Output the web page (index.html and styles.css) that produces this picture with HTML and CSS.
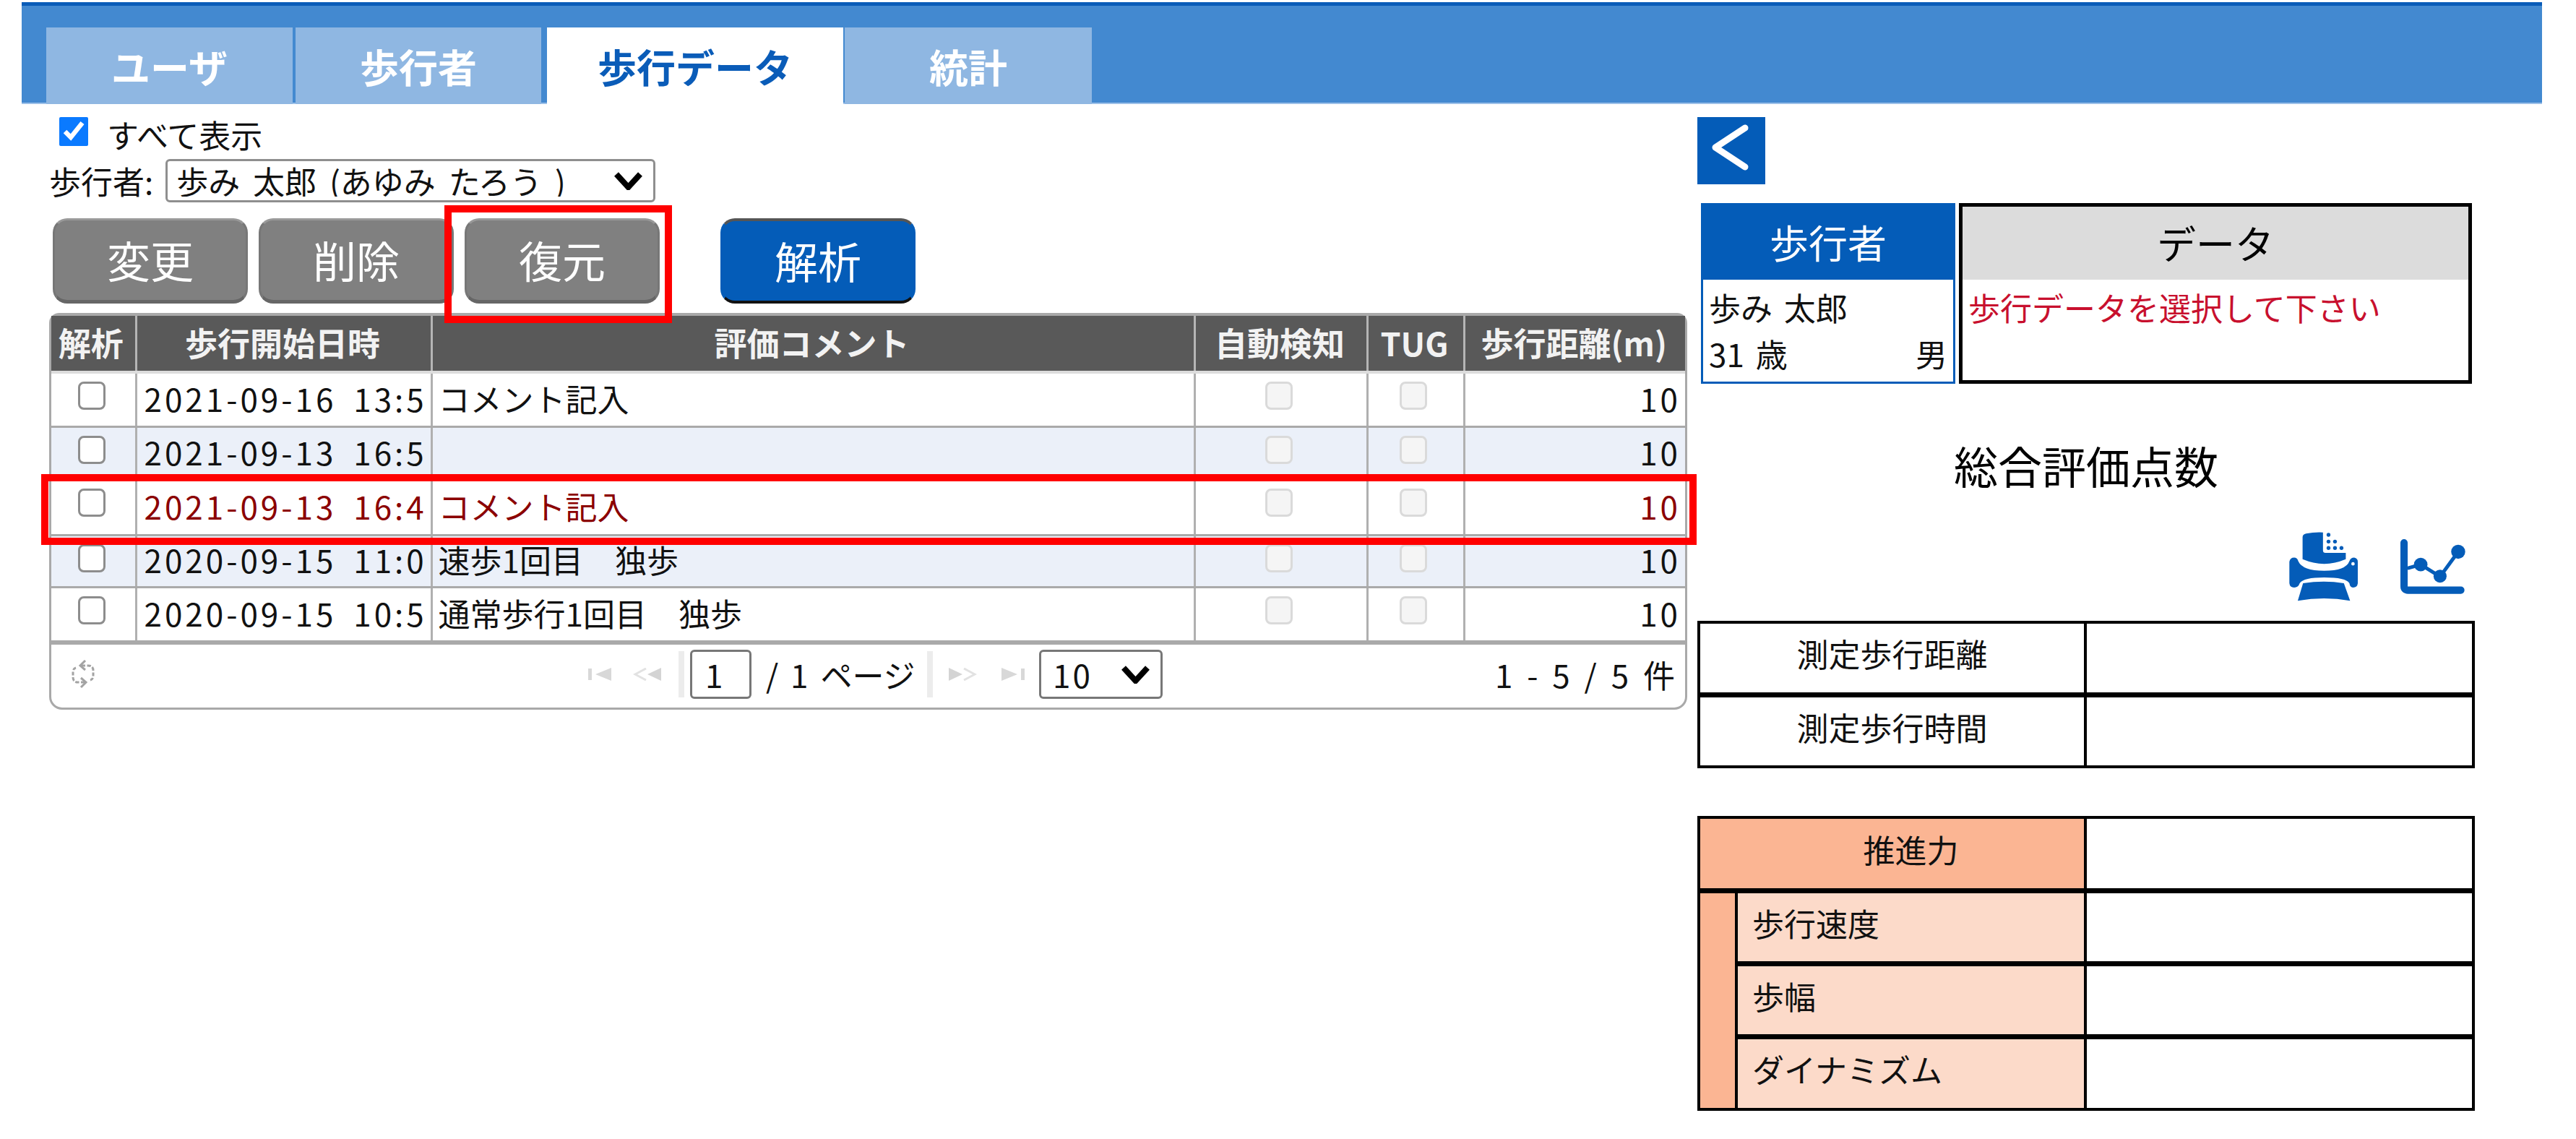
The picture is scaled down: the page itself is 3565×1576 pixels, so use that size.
FILE: index.html
```html
<!DOCTYPE html>
<html lang="ja">
<head>
<meta charset="utf-8">
<title>歩行データ</title>
<link rel="stylesheet" href="styles.css">
</head>
<body>
<div class="page">
  <nav class="tabbar">
    <a class="tab tab-user">ユーザ</a>
    <a class="tab tab-walker">歩行者</a>
    <a class="tab tab-active">歩行データ</a>
    <a class="tab tab-stats">統計</a>
  </nav>
  <div class="content">
    <section class="left">
      <label class="showall"><input type="checkbox" checked class="check-on"><span>すべて表示</span></label>
      <div class="walker-line">
        <span>歩行者:</span>
        <select class="walker-select"><option>歩み 太郎 (あゆみ たろう )</option></select>
      </div>
      <div class="buttons">
        <button class="btn">変更</button>
        <button class="btn">削除</button>
        <button class="btn">復元</button>
        <button class="btn btn-primary">解析</button>
      </div>
      <div class="grid-wrap">
        <table class="grid">
          <colgroup><col class="c1"><col class="c2"><col class="c3"><col class="c4"><col class="c5"><col class="c6"></colgroup>
          <thead><tr><th>解析</th><th>歩行開始日時</th><th>評価コメント</th><th>自動検知</th><th>TUG</th><th>歩行距離(m)</th></tr></thead>
          <tbody>
            <tr class="r1"><td class="ctr"><input type="checkbox" class="cb"></td><td class="date">2021-09-16 13:5</td><td>コメント記入</td><td class="ctr"><input type="checkbox" class="cb" disabled></td><td class="ctr"><input type="checkbox" class="cb" disabled></td><td class="num">10</td></tr>
            <tr class="r2 alt"><td class="ctr"><input type="checkbox" class="cb"></td><td class="date">2021-09-13 16:5</td><td></td><td class="ctr"><input type="checkbox" class="cb" disabled></td><td class="ctr"><input type="checkbox" class="cb" disabled></td><td class="num">10</td></tr>
            <tr class="r3 deleted"><td class="ctr"><input type="checkbox" class="cb"></td><td class="date">2021-09-13 16:4</td><td>コメント記入</td><td class="ctr"><input type="checkbox" class="cb" disabled></td><td class="ctr"><input type="checkbox" class="cb" disabled></td><td class="num">10</td></tr>
            <tr class="r4 alt"><td class="ctr"><input type="checkbox" class="cb"></td><td class="date">2020-09-15 11:0</td><td>速歩1回目　独歩</td><td class="ctr"><input type="checkbox" class="cb" disabled></td><td class="ctr"><input type="checkbox" class="cb" disabled></td><td class="num">10</td></tr>
            <tr class="r5"><td class="ctr"><input type="checkbox" class="cb"></td><td class="date">2020-09-15 10:5</td><td>通常歩行1回目　独歩</td><td class="ctr"><input type="checkbox" class="cb" disabled></td><td class="ctr"><input type="checkbox" class="cb" disabled></td><td class="num">10</td></tr>
          </tbody>
        </table>
        <div class="pager">
          <svg class="ic-refresh" viewBox="0 0 34 40" width="34" height="40"><g fill="none" stroke="#a3a3a3" stroke-width="3" stroke-dasharray="5 2.5"><path d="M15 8 H24 Q31 8 31 15 V22 Q31 27 27 28"/><path d="M19 31 H10 Q3 31 3 24 V17 Q3 12 7 11"/></g><path d="M20 1 L13 8 L20 14" fill="none" stroke="#a3a3a3" stroke-width="3"/><path d="M14 25 L21 31 L14 38" fill="none" stroke="#a3a3a3" stroke-width="3"/></svg>
          <svg class="ic-first" viewBox="0 0 32 18" width="32" height="18"><path d="M0 1h5v16H0zM32 0v18L10 9z" fill="#d8d8d8"/></svg>
          <svg class="ic-prev" viewBox="0 0 39 18" width="39" height="18"><path d="M39 0v18L20 9z" fill="#d4d4d4"/><path d="M18 1 L3 9 L18 17" fill="none" stroke="#e2e2e2" stroke-width="3"/></svg>
          <span class="pg-sep sep-a"></span>
          <input class="pg-input" type="text" value="1" aria-label="ページ">
          <span class="pg-text">/ 1 ページ</span>
          <span class="pg-sep sep-b"></span>
          <svg class="ic-next" viewBox="0 0 39 18" width="39" height="18"><path d="M0 0v18L19 9z" fill="#d4d4d4"/><path d="M21 1 L36 9 L21 17" fill="none" stroke="#e2e2e2" stroke-width="3"/></svg>
          <svg class="ic-last" viewBox="0 0 32 18" width="32" height="18"><path d="M32 1h-5v16h5zM0 0v18L22 9z" fill="#d8d8d8"/></svg>
          <select class="pg-select"><option>10</option></select>
          <span class="pg-count">1 - 5 / 5 件</span>
        </div>
      </div>
    </section>
    <aside class="right">
      <button class="back" aria-label="戻る"><svg viewBox="0 0 94 93" width="94" height="93"><polyline points="66,15 25,42 66,69" fill="none" stroke="#fff" stroke-width="9" stroke-linecap="round" stroke-linejoin="round"/></svg></button>
      <div class="cards">
        <div class="card card-walker">
          <div class="card-head">歩行者</div>
          <div class="card-body">
            <div class="line">歩み 太郎</div>
            <div class="line split"><span>31 歳</span><span>男</span></div>
          </div>
        </div>
        <div class="card card-data">
          <div class="card-head">データ</div>
          <div class="card-body"><div class="line warn">歩行データを選択して下さい</div></div>
        </div>
      </div>
      <h2 class="score">総合評価点数</h2>
      <div class="icons">
        <svg width="97" height="98" viewBox="135 45 290 295"><g fill="#045cb8"><path d="M205 55 Q240 48 275 50 V125 Q275 135 285 135 H370 V162 Q280 200 190 162 V70 Q190 58 205 55Z"/><circle cx="298" cy="60" r="8"/><circle cx="298" cy="88" r="8"/><circle cx="325" cy="88" r="8"/><circle cx="298" cy="115" r="8"/><circle cx="325" cy="115" r="8"/><circle cx="352" cy="115" r="8"/><path d="M135 172 Q138 155 155 155 Q168 155 172 170 Q190 210 280 210 Q370 210 385 170 Q390 155 405 155 Q420 158 420 172 V262 Q418 280 400 280 Q388 280 385 262 Q370 238 280 238 Q195 238 178 262 Q172 280 155 280 Q137 280 135 262Z"/><path d="M192 262 Q280 248 362 262 L388 335 Q280 315 170 335Z"/></g><circle cx="400" cy="181" r="7" fill="#fff"/></svg>
        <svg width="92" height="78" viewBox="600 70 275 233"><g fill="none" stroke="#045cb8" stroke-linecap="round" stroke-linejoin="round"><path d="M621 88 V268 Q621 284 637 284 H856" stroke-width="30"/><path d="M640 192 L690 178 L770 228 L845 125" stroke-width="15"/></g><g fill="#045cb8"><circle cx="690" cy="178" r="28"/><circle cx="770" cy="226" r="27"/><circle cx="845" cy="125" r="29"/></g></svg>
      </div>
      <table class="metrics m1">
        <colgroup><col class="m-label"><col></colgroup>
        <tr><th>測定歩行距離</th><td></td></tr>
        <tr><th>測定歩行時間</th><td></td></tr>
      </table>
      <table class="metrics m2">
        <colgroup><col class="m-rail"><col class="m-sub"><col></colgroup>
        <tr><th class="main" colspan="2">推進力</th><td></td></tr>
        <tr><th class="rail" rowspan="3"></th><th class="sub">歩行速度</th><td></td></tr>
        <tr><th class="sub">歩幅</th><td></td></tr>
        <tr><th class="sub">ダイナミズム</th><td></td></tr>
      </table>
    </aside>
  </div>
  <div class="mark mark-button"></div>
  <div class="mark mark-row"></div>
</div>
</body>
</html>
```
FILE: styles.css
```css
* { box-sizing: border-box; }
html, body { margin: 0; padding: 0; background: #fff; }
body { font-family: "Noto Sans CJK JP", "Noto Sans", sans-serif; font-size: 44px; color: #111; }
.page { position: relative; width: 3565px; height: 1576px; padding: 3px 0 0 30px; overflow: hidden; }

/* tabs */
.tabbar { display: flex; align-items: flex-end; width: 3488px; height: 141px; padding-left: 34px; background: #4389d0; border-top: 5px solid #0a5cb8; border-bottom: 2px solid #9cc0e8; }
.tab { display: flex; align-items: center; justify-content: center; height: 106px; margin-bottom: -2px; font-size: 54px; font-weight: 700; color: #fff; background: #8fb7e2; }
.tab-user { width: 341px; }
.tab-walker { width: 340px; margin-left: 4px; }
.tab-active { width: 410px; margin-left: 8px; background: #fff; color: #0a5cb8; }
.tab-stats { width: 342px; margin-left: 2px; }

.content { display: flex; padding: 18px 0 0 38px; }
.left { width: 2281px; flex: none; }
.right { width: 1076px; flex: none; }

/* filter */
.showall { display: flex; align-items: center; height: 40px; margin-left: 14px; }
.showall span { padding-top: 8px; }
.check-on { width: 40px; height: 40px; margin: 0 26px 0 0; accent-color: #0a7aff; }
.walker-line { display: flex; align-items: center; gap: 14px; height: 60px; margin-top: 18px; }
.walker-select { width: 678px; height: 60px; margin-left: 3px; padding: 0 0 0 12px; font: inherit; word-spacing: 8px; line-height: 1; color: #111; background: #fff url("data:image/svg+xml,%3Csvg xmlns='http://www.w3.org/2000/svg' viewBox='0 0 41 25'%3E%3Cpath d='M4 3 L20.500 21 L37 3' fill='none' stroke='%23000' stroke-width='8'/%3E%3C/svg%3E") no-repeat right 14px center / 41px 25px; border: 3px solid #8f8f8f; border-radius: 6px; appearance: none; }

/* buttons */
.buttons { display: flex; height: 118px; margin: 22px 0 13px 5px; }
.btn { width: 270px; height: 118px; margin-right: 15px; padding: 0 0 4px; font: inherit; font-size: 60px; color: #fff; background: #808080; border: 3px solid #777; border-top-color: #999; border-bottom: 5px solid #666; border-radius: 20px; }
.btn-primary { margin-left: 69px; background: #045cb8; border-color: #045cb8; border-top: 4px solid #555; border-bottom: 4px solid #111; }

/* grid */
.grid-wrap { width: 2267px; height: 549px; background: #fff; border: 3px solid #a9a9a9; border-top-width: 4px; border-radius: 14px 14px 18px 18px; }
.grid { width: 2261px; table-layout: fixed; border-collapse: collapse; }
.c1 { width: 117px; } .c2 { width: 409px; } .c3 { width: 1056px; } .c4 { width: 239px; } .c5 { width: 134px; } .c6 { width: 306px; }
.grid th { height: 78px; padding: 0 3px 3px 0; font-size: 45px; font-weight: 700; line-height: 1; color: #f2f2f2; background: #595959; border-left: 3px solid #b5b5b5; border-bottom: 4px solid #ddd; white-space: nowrap; }
.grid th:first-child { padding-right: 6px; }
.grid th:first-child, .grid td:first-child { border-left: 0; }
.grid td { padding: 0 10px 4px 8px; font-size: 44px; line-height: 1; white-space: nowrap; overflow: hidden; border-left: 3px solid #b0b0b0; border-bottom: 3px solid #aaa; }
.r1 td { height: 75px; } .r2 td { height: 73px; } .r3 td { height: 77px; } .r4 td { height: 72px; } .r5 td { height: 77px; border-bottom-width: 6px; }
.alt td { background: #ebf0f9; }
.deleted td { color: #8b0000; }
.grid td.ctr { padding: 0 6px 0 0; text-align: center; vertical-align: top; }
.grid td:first-child.ctr { padding-right: 3px; }
.grid td.date { padding-left: 10px; letter-spacing: 4px; word-spacing: 10px; }
.grid td.num { padding-right: 6px; letter-spacing: 4px; text-align: right; }
.cb { display: block; width: 38px; height: 39px; margin: 11px auto 0; background: #fff; border: 3px solid #8d8d8d; border-radius: 8px; appearance: none; }
.cb:disabled { background: #f5f5f5; border-color: #dadada; }

/* pager */
.pager { display: flex; align-items: center; height: 82px; padding-left: 27px; color: #111; }
.ic-first { margin-left: 682px; }
.ic-prev { margin-left: 30px; }
.pg-sep { width: 8px; height: 64px; background: #ececec; }
.sep-a { margin-left: 24px; }
.pg-input { width: 85px; height: 68px; margin-left: 8px; padding: 0 0 0 18px; font: inherit; color: #111; background: #fff; border: 3px solid #777; border-radius: 6px; }
.pg-text { margin-left: 20px; width: 223px; word-spacing: 7px; white-space: nowrap; }
.ic-next { margin-left: 22px; }
.ic-last { margin-left: 34px; }
.pg-select { width: 171px; height: 68px; margin-left: 20px; padding: 0 0 0 16px; font: inherit; letter-spacing: 3px; line-height: 1; color: #111; background: #fff url("data:image/svg+xml,%3Csvg xmlns='http://www.w3.org/2000/svg' viewBox='0 0 41 25'%3E%3Cpath d='M4 3 L20.500 21 L37 3' fill='none' stroke='%23000' stroke-width='8'/%3E%3C/svg%3E") no-repeat right 14px center / 41px 25px; border: 3px solid #777; border-radius: 6px; appearance: none; }
.pg-count { margin-left: auto; margin-right: 12px; letter-spacing: 2px; word-spacing: 6px; white-space: nowrap; }

/* right column */
.back { display: block; width: 94px; height: 93px; padding: 0; background: #045cb8; border: 0; }
.back svg { display: block; }
.cards { display: flex; gap: 5px; margin: 26px 0 0 5px; }
.card { height: 250px; border-style: solid; }
.card-walker { width: 352px; border: 3px solid #045cb8; }
.card-data { width: 710px; border: 5px solid #000; }
.card-head { display: flex; align-items: center; justify-content: center; padding-bottom: 3px; font-size: 54px; }
.card-walker .card-head { height: 103px; color: #fff; background: #045cb8; }
.card-data .card-head { height: 101px; color: #000; background: #dcdcdc; }
.card-body { padding: 0 8px; }
.line { height: 64px; display: flex; align-items: center; padding-top: 12px; word-spacing: 6px; }
.split { justify-content: space-between; }
.warn { color: #c8102e; }
.score { margin: 72px 0 0; height: 84px; font-size: 61px; font-weight: 400; line-height: 82px; text-align: center; color: #000; }
.icons { display: flex; align-items: center; justify-content: flex-end; gap: 55px; height: 98px; margin-top: 48px; padding-right: 13px; }

.metrics { width: 1076px; table-layout: fixed; border-collapse: collapse; border: 4px solid #000; }
.metrics th, .metrics td { padding: 0 0 12px; font-size: 44px; font-weight: 400; line-height: 1; border-bottom: 7px solid #000; }
.metrics tr:last-child th, .metrics tr:last-child td { border-bottom: 0; }
.metrics td { border-left: 4px solid #000; }
.m-label { width: 535px; }
.m-rail { width: 52px; }
.m-sub { width: 483px; }
.m1 { margin-top: 26px; }
.m1 tr { height: 100px; }
.m2 { margin-top: 66px; }
.m2 tr { height: 101px; }
.m2 .main { padding-left: 52px; background: #fbb593; }
.m2 .rail { background: #fbb593; border-bottom: 0; }
.m2 .sub { padding-left: 20px; text-align: left; background: #fcdac9; border-left: 4px solid #000; }

/* annotation boxes */
.mark { position: absolute; border: 10px solid #f00; pointer-events: none; }
.mark-button { left: 615px; top: 284px; width: 315px; height: 163px; }
.mark-row { left: 57px; top: 656px; width: 2291px; height: 98px; }
```
